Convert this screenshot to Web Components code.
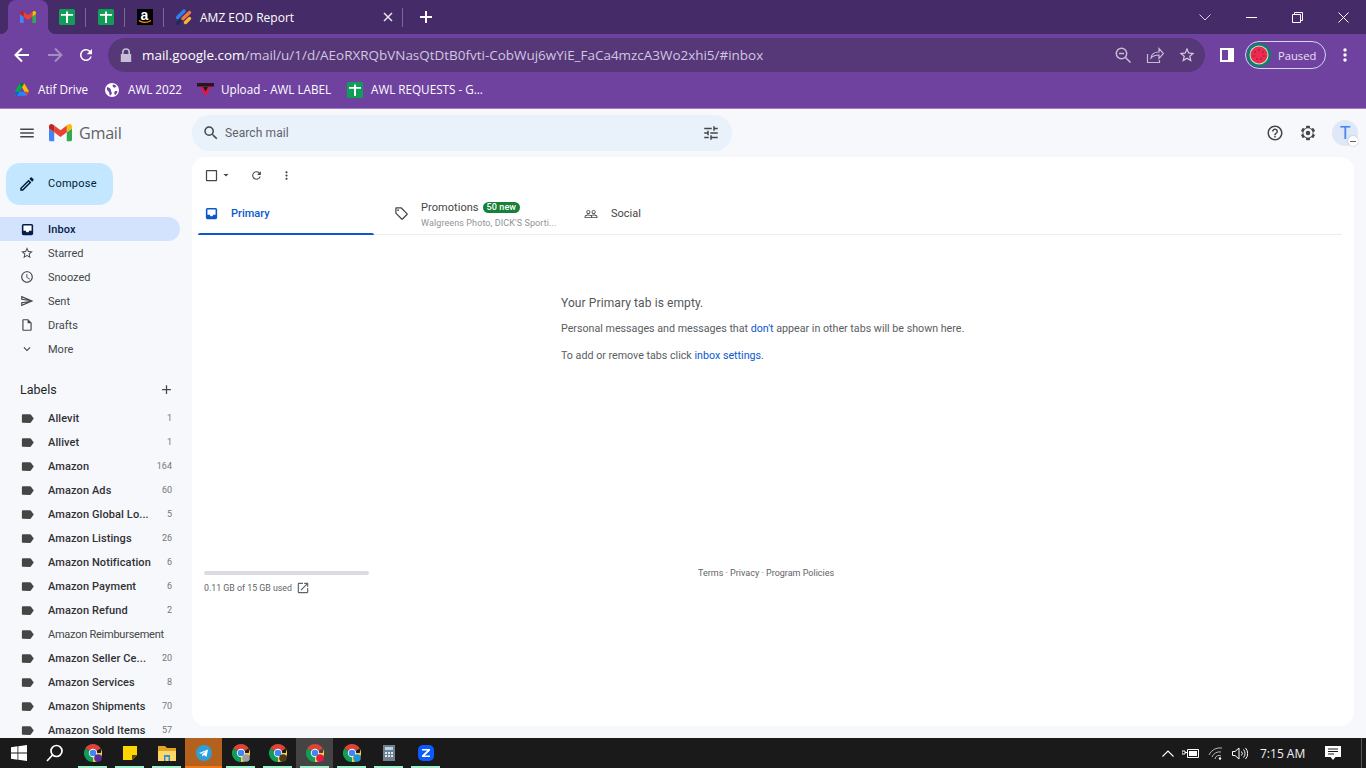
<!DOCTYPE html>
<html lang="en">
<head>
<meta charset="utf-8">
<title>Inbox - Gmail</title>
<style>
  html, body { margin: 0; height: 100%; overflow: hidden; }
  body { display: flex; flex-direction: column; width: 1366px; height: 768px; font-family: Roboto, "Liberation Sans", sans-serif; }
</style>
</head>
<body>
<chrome-tabs></chrome-tabs>
<chrome-toolbar></chrome-toolbar>
<chrome-bookmarks></chrome-bookmarks>
<gmail-app></gmail-app>
<win-taskbar></win-taskbar>

<script>
const P = {
  menu: 'M3 18h18v-2H3v2zm0-5h18v-2H3v2zm0-7v2h18V6H3z',
  search: 'M15.5 14h-.79l-.28-.27A6.471 6.471 0 0 0 16 9.5 6.5 6.5 0 1 0 9.5 16c1.61 0 3.09-.59 4.23-1.57l.27.28v.79l5 4.99L20.49 19l-4.99-5zm-6 0C7.01 14 5 11.99 5 9.5S7.01 5 9.5 5 14 7.01 14 9.5 11.99 14 9.5 14z',
  tune: 'M3 17v2h6v-2H3zM3 5v2h10V5H3zm10 16v-2h8v-2h-8v-2h-2v6h2zM7 9v2H3v2h4v2h2V9H7zm14 4v-2H11v2h10zm-6-4h2V7h4V5h-4V3h-2v6z',
  help: 'M11 18h2v-2h-2v2zm1-16C6.48 2 2 6.48 2 12s4.48 10 10 10 10-4.48 10-10S17.52 2 12 2zm0 18c-4.41 0-8-3.59-8-8s3.59-8 8-8 8 3.59 8 8-3.59 8-8 8zm0-14c-2.21 0-4 1.79-4 4h2c0-1.1.9-2 2-2s2 .9 2 2c0 2-3 1.75-3 5h2c0-2.25 3-2.5 3-5 0-2.21-1.79-4-4-4z',
  gear: 'M19.14 12.94c.04-.3.06-.61.06-.94 0-.32-.02-.64-.07-.94l2.03-1.58a.49.49 0 0 0 .12-.61l-1.92-3.32a.488.488 0 0 0-.59-.22l-2.39.96c-.5-.38-1.03-.7-1.62-.94l-.36-2.54a.484.484 0 0 0-.48-.41h-3.84c-.24 0-.43.17-.47.41l-.36 2.54c-.59.24-1.13.57-1.62.94l-2.39-.96c-.22-.08-.47 0-.59.22L2.74 8.87c-.12.21-.08.47.12.61l2.03 1.58c-.05.3-.09.63-.09.94s.02.64.07.94l-2.03 1.58a.49.49 0 0 0-.12.61l1.92 3.32c.12.22.37.29.59.22l2.39-.96c.5.38 1.03.7 1.62.94l.36 2.54c.05.24.24.41.48.41h3.84c.24 0 .44-.17.47-.41l.36-2.54c.59-.24 1.13-.56 1.62-.94l2.39.96c.22.08.47 0 .59-.22l1.92-3.32c.12-.22.07-.47-.12-.61l-2.01-1.58zM12 18.2a6.2 6.2 0 1 1 0-12.4 6.2 6.2 0 0 1 0 12.4zM12 15a3 3 0 1 0 0-6 3 3 0 0 0 0 6z',
  edit: 'M3 17.25V21h3.75L17.81 9.94l-3.75-3.75L3 17.25zM5.92 19H5v-.92l9.06-9.06.92.92L5.92 19zM20.71 5.63l-2.34-2.34a1 1 0 0 0-1.41 0l-1.83 1.83 3.75 3.75 1.83-1.83a1 1 0 0 0 0-1.41z',
  star: 'M22 9.24l-7.19-.62L12 2 9.19 8.63 2 9.24l5.46 4.73L5.82 21 12 17.27 18.18 21l-1.63-7.03L22 9.24zM12 15.4l-3.76 2.27 1-4.28-3.32-2.88 4.38-.38L12 6.1l1.71 4.04 4.38.38-3.32 2.88 1 4.28L12 15.4z',
  clock: 'M11.99 2C6.47 2 2 6.48 2 12s4.47 10 9.99 10C17.52 22 22 17.52 22 12S17.52 2 11.99 2zM12 20c-4.42 0-8-3.58-8-8s3.58-8 8-8 8 3.58 8 8-3.58 8-8 8zm.5-13H11v6l5.25 3.15.75-1.23-4.5-2.67z',
  send: 'M4 6.03l7.5 3.22-7.5-1 .01-2.22zm7.49 8.72L4 17.97v-2.22l7.49-1zM2.01 3L2 10l15 2-15 2 .01 7L23 12 2.01 3z',
  draft: 'M14 2H6c-1.1 0-2 .9-2 2v16c0 1.1.9 2 2 2h12c1.1 0 2-.9 2-2V8l-6-6zm4 18H6V4h7v5h5v11z',
  more: 'M16.59 8.59L12 13.17 7.41 8.59 6 10l6 6 6-6z',
  label: 'M17.63 5.84C17.27 5.33 16.67 5 16 5L5 5.01C3.9 5.01 3 5.9 3 7v10c0 1.1.9 1.99 2 1.99L16 19c.67 0 1.27-.33 1.63-.84L22 12l-4.37-6.16z',
  add: 'M19 13h-6v6h-2v-6H5v-2h6V5h2v6h6v2z',
  refresh: 'M17.65 6.35A7.958 7.958 0 0 0 12 4c-4.42 0-7.99 3.58-7.99 8s3.57 8 7.99 8c3.73 0 6.84-2.55 7.73-6h-2.08A5.99 5.99 0 0 1 12 18c-3.31 0-6-2.69-6-6s2.69-6 6-6c1.66 0 3.14.69 4.22 1.78L13 11h7V4l-2.35 2.35z',
  dots: 'M12 8c1.1 0 2-.9 2-2s-.9-2-2-2-2 .9-2 2 .9 2 2 2zm0 2c-1.1 0-2 .9-2 2s.9 2 2 2 2-.9 2-2-.9-2-2-2zm0 6c-1.1 0-2 .9-2 2s.9 2 2 2 2-.9 2-2-.9-2-2-2z',
  tag: 'M21.41 11.58l-9-9C12.05 2.22 11.55 2 11 2H4c-1.1 0-2 .9-2 2v7c0 .55.22 1.05.59 1.42l9 9c.36.36.86.58 1.41.58s1.05-.22 1.41-.59l7-7c.37-.36.59-.86.59-1.41s-.23-1.06-.59-1.42zM13 20.01L4 11V4h7v-.01l9 8.99-7 7.02zM6.5 8a1.5 1.5 0 1 0 0-3 1.5 1.5 0 0 0 0 3z',
  people: 'M16.5 13c-1.2 0-3.07.34-4.5 1-1.43-.67-3.3-1-4.5-1C5.33 13 1 14.08 1 16.25V19h22v-2.75c0-2.17-4.33-3.25-6.5-3.25zm-4 4.5h-10v-1.25c0-.54 2.56-1.75 5-1.75s5 1.21 5 1.75v1.25zm9 0H14v-1.25c0-.46-.2-.86-.52-1.22.88-.3 1.96-.53 3.02-.53 2.44 0 5 1.21 5 1.75v1.25zM7.5 12c1.93 0 3.5-1.57 3.5-3.5S9.43 5 7.5 5 4 6.57 4 8.5 5.57 12 7.5 12zm0-5.5c1.1 0 2 .9 2 2s-.9 2-2 2-2-.9-2-2 .9-2 2-2zm9 5.5c1.93 0 3.5-1.57 3.5-3.5S18.43 5 16.5 5 13 6.57 13 8.5s1.57 3.5 3.5 3.5zm0-5.5c1.1 0 2 .9 2 2s-.9 2-2 2-2-.9-2-2 .9-2 2-2z',
  open: 'M19 19H5V5h7V3H5a2 2 0 0 0-2 2v14a2 2 0 0 0 2 2h14c1.1 0 2-.9 2-2v-7h-2v7zM14 3v2h3.59l-9.83 9.83 1.41 1.41L19 6.41V10h2V3h-7z',
  check: 'M19 5v14H5V5h14m0-2H5c-1.1 0-2 .9-2 2v14c0 1.1.9 2 2 2h14c1.1 0 2-.9 2-2V5c0-1.1-.9-2-2-2z',
  caret: 'M7 10l5 5 5-5z'
};

function icon(name, size, color) {
  return `<svg width="${size}" height="${size}" viewBox="0 0 24 24" fill="${color}" style="display:block;flex:none"><path d="${P[name]}"/></svg>`;
}

// filled inbox with a white tray, the plain outline looked too thin
const inboxIcon = (size, color) => `<svg width="${size}" height="${size}" viewBox="0 0 24 24" style="display:block;flex:none">
  <rect x="3" y="3" width="18" height="18" rx="2.500" fill="${color}"/>
  <path d="M5.500 5.500h13v8.500h-4c0 1.500-1.100 2.500-2.500 2.500s-2.500-1-2.500-2.500h-4z" fill="#fff"/></svg>`;

const gmailLogo = s => `<svg width="${s}" height="${s * 0.75}" viewBox="52 42 88 66" style="display:block;flex:none">
  <path fill="#4285f4" d="M58 108h14V74L52 59v43c0 3.32 2.69 6 6 6"/>
  <path fill="#34a853" d="M120 108h14c3.32 0 6-2.69 6-6V59l-20 15"/>
  <path fill="#fbbc04" d="M120 48v26l20-15v-8c0-7.42-8.47-11.65-14.4-7.2"/>
  <path fill="#ea4335" d="M72 74V48l24 18 24-18v26L96 92"/>
  <path fill="#c5221f" d="M52 51v8l20 15V48l-5.6-4.2c-5.94-4.45-14.4-.22-14.4 7.2"/></svg>`;

const sheetsIcon = `<svg width="16" height="16" viewBox="0 0 16 16" style="display:block;flex:none">
  <rect width="16" height="16" rx="1.5" fill="#0f9d58"/>
  <path fill="#fff" d="M7 2.500h2V5h5v1.800H9V14H7V6.800H2V5h5z"/></svg>`;

// tabs row
class ChromeTabs extends HTMLElement {
  connectedCallback() {
    const root = this.attachShadow({ mode: 'open' });
    root.innerHTML = `
      <style>
        :host { display: flex; height: 34px; flex: none; background: #452c68; color: #fff; font: 12px "Open Sans", "Noto Sans", sans-serif; align-items: stretch; padding-left: 8px; }
        .active { width: 40px; background: #6f42a0; border-radius: 8px 8px 0 0; display: flex; align-items: center; justify-content: center; position: relative; }
        .active::before, .active::after { content: ""; position: absolute; bottom: 0; width: 8px; height: 8px; }
        .active::before { left: -8px; background: radial-gradient(circle at 0 0, transparent 8px, #6f42a0 8.5px); }
        .active::after { right: -8px; background: radial-gradient(circle at 100% 0, transparent 8px, #6f42a0 8.5px); }
        .pin { width: 39px; display: flex; align-items: center; justify-content: center; position: relative; }
        .pin.sep::after, .title::after { content: ""; position: absolute; right: 0; top: 8px; height: 19px; width: 1px; background: #7d6a98; }
        .title { width: 239px; display: flex; align-items: center; position: relative; padding-left: 12px; box-sizing: border-box; }
        .title span { margin-left: 8px; flex: 1; }
        .title svg.x { margin-right: 10px; }
        .plus { width: 46px; display: flex; align-items: center; justify-content: center; }
        .win { margin-left: auto; display: flex; }
        .win div { width: 46px; display: flex; align-items: center; justify-content: center; }
        .amz { width: 16px; height: 16px; background: #000; color: #fff; position: relative; font: bold 14px/13px "Liberation Sans", sans-serif; text-align: center; }
        .amz svg { position: absolute; left: 1px; bottom: 1px; }
      </style>
      <div class="active">${gmailLogo(16)}</div>
      <div class="pin sep" style="width:38px">${sheetsIcon}</div>
      <div class="pin sep">${sheetsIcon}</div>
      <div class="pin sep"><div class="amz">a<svg width="14" height="4" viewBox="0 0 14 4"><path d="M1 .5c3 2.6 8 2.6 12 0" fill="none" stroke="#f90" stroke-width="1.2"/></svg></div></div>
      <div class="title">
        <svg width="16" height="16" viewBox="0 0 16 16" style="flex:none">
          <path d="M1.500 8.500 8 2" stroke="#2f80ed" stroke-width="3.400" stroke-linecap="round"/>
          <path d="M7 9.500 13.500 3.500" stroke="#f2783a" stroke-width="3.400" stroke-linecap="round"/>
          <path d="M9.500 13.500l4-4" stroke="#f7b733" stroke-width="3.400" stroke-linecap="round"/>
          <path d="M1.500 14.500 4 12" stroke="#1c2a5a" stroke-width="3" stroke-linecap="round"/>
        </svg>
        <span>AMZ EOD Report</span>
        <svg class="x" width="10" height="10" viewBox="0 0 10 10"><path d="M1 1l8 8M9 1l-8 8" stroke="#e8e4ee" stroke-width="1.500"/></svg>
      </div>
      <div class="plus"><svg width="12" height="12" viewBox="0 0 12 12"><path d="M6 0v12M0 6h12" stroke="#fff" stroke-width="2"/></svg></div>
      <div class="win">
        <div><svg width="12" height="7" viewBox="0 0 12 7"><path d="M.5.5 6 6 11.500.5" fill="none" stroke="#d9d2e4"/></svg></div>
        <div><svg width="11" height="1"><rect width="11" height="1" fill="#fff"/></svg></div>
        <div><svg width="11" height="11" viewBox="0 0 11 11"><path d="M.5 2.500h8v8h-8zM2.500 2.500v-2h8v8h-2" fill="none" stroke="#fff"/></svg></div>
        <div><svg width="11" height="11" viewBox="0 0 11 11"><path d="M.5.5l10 10M10.500.5l-10 10" stroke="#fff"/></svg></div>
      </div>`;
  }
}
customElements.define('chrome-tabs', ChromeTabs);

// back / forward / omnibox / profile
class ChromeToolbar extends HTMLElement {
  connectedCallback() {
    const root = this.attachShadow({ mode: 'open' });
    root.innerHTML = `
      <style>
        :host { display: flex; height: 38px; flex: none; background: #6f42a0; align-items: flex-end; font: 14px "Open Sans", "Noto Sans", sans-serif; color: #fff; box-sizing: border-box; }
        .nav { display: flex; width: 108px; height: 34px; align-items: center; padding-left: 14px; box-sizing: border-box; gap: 15px; }
        .omni { width: 1097px; height: 34px; background: #563878; border-radius: 17px; display: flex; align-items: center; padding-left: 12px; box-sizing: border-box; }
        .url { margin-left: 10px; flex: 1; white-space: nowrap; color: #d2c6e0; font-size: 13.460px; }
        .url b { font-weight: 400; color: #fff; }
        .acts { display: flex; gap: 14px; margin-right: 9px; align-items: center; }
        .right { display: flex; flex: 1; align-items: center; height: 34px; padding-left: 15px; box-sizing: border-box; }
        .panel { width: 14px; height: 14px; background: #fff; position: relative; flex: none; }
        .panel::after { content: ""; position: absolute; left: 2px; top: 2px; width: 6px; height: 10px; background: #6f42a0; }
        .pill { margin-left: 11px; width: 81px; height: 28px; box-sizing: border-box; border: 1px solid #cfd8f0; border-radius: 14px; display: flex; align-items: center; padding-left: 1px; font-size: 11.200px; color: #e8e0f2; flex: none; }
        .pill span { margin-left: 7px; }
        .dots { margin-left: 17px; }
        .ring { width: 24px; height: 24px; }
      </style>
      <div class="nav">
        <svg width="16" height="16" viewBox="0 0 16 16" style="flex:none"><path d="M15 8H2M8 1.500 1.500 8 8 14.500" fill="none" stroke="#fff" stroke-width="2"/></svg>
        <svg width="16" height="16" viewBox="0 0 16 16" style="flex:none;margin-left:2px"><path d="M1 8h13M8 1.500 14.500 8 8 14.500" fill="none" stroke="#a48cc2" stroke-width="2"/></svg>
        ${icon('refresh', 18, '#fff').replace('flex:none', 'flex:none;margin-left:-1px')}
      </div>
      <div class="omni">
        <svg width="12" height="14" viewBox="0 0 12 14" style="flex:none"><path d="M2 6V4.200a4 4 0 0 1 8 0V6h1.200v8H.8V6zm1.600 0h4.800V4.200a2.400 2.400 0 0 0-4.800 0z" fill="#c8bcd6"/></svg>
        <div class="url"><b>mail.google.com</b>/mail/u/1/d/AEoRXRQbVNasQtDtB0fvti-CobWuj6wYiE_FaCa4mzcA3Wo2xhi5/#inbox</div>
        <div class="acts">
          <svg width="18" height="18" viewBox="0 0 18 18"><circle cx="7.500" cy="7.500" r="5.200" fill="none" stroke="#c8bcd6" stroke-width="1.500"/><path d="M5 7.500h5M11.500 11.500l5 5" stroke="#c8bcd6" stroke-width="1.500"/></svg>
          <svg width="18" height="18" viewBox="0 0 18 18"><path d="M1.500 8v8.500h12V14M5 12c.5-4 3.500-6 8-6V2.500l4.500 5-4.500 5V9c-3.500 0-6 .8-8 3z" fill="none" stroke="#c8bcd6" stroke-width="1.200"/></svg>
          ${icon('star', 18, '#d6cce2')}
        </div>
      </div>
      <div class="right">
        <div class="panel"></div>
        <div class="pill">
          <svg class="ring" viewBox="0 0 24 24" style="flex:none">
            <circle cx="12" cy="12" r="12" fill="#0e7f6c"/><circle cx="12" cy="12" r="9.500" fill="#c8e6c0"/><circle cx="12" cy="12" r="8.500" fill="#ee2a50"/>
            <g fill="#7a1c36"><circle cx="8" cy="9" r=".8"/><circle cx="12" cy="7" r=".8"/><circle cx="16" cy="9" r=".8"/><circle cx="7" cy="13" r=".8"/><circle cx="17" cy="13" r=".8"/><circle cx="10" cy="16" r=".8"/><circle cx="14" cy="16" r=".8"/></g>
          </svg>
          <span>Paused</span>
        </div>
        <svg class="dots" width="4" height="14" viewBox="0 0 4 14" style="flex:none"><circle cx="2" cy="2" r="1.700" fill="#fff"/><circle cx="2" cy="7" r="1.700" fill="#fff"/><circle cx="2" cy="12" r="1.700" fill="#fff"/></svg>
      </div>`;
  }
}
customElements.define('chrome-toolbar', ChromeToolbar);

class ChromeBookmarks extends HTMLElement {
  connectedCallback() {
    const root = this.attachShadow({ mode: 'open' });
    root.innerHTML = `
      <style>
        :host { display: flex; height: 37px; flex: none; background: #6f42a0; border-bottom: 1px solid #9b7fc0; box-sizing: border-box; align-items: center; padding-left: 15px; color: #fff; font: 11.700px "Open Sans", "Noto Sans", sans-serif; padding-bottom: 1px; }
        .b { display: flex; align-items: center; white-space: nowrap; line-height: 14px; padding-bottom: 1px; }
        .b svg { margin-top: 1px; }
      </style>
      <div class="b" style="width:90px;gap:9px">
        <svg width="14" height="13" viewBox="0 0 87.3 78" style="flex:none">
          <path d="m6.6 66.85 3.85 6.65c.8 1.4 1.95 2.5 3.3 3.3l13.75-23.8h-27.5c0 1.55.4 3.1 1.2 4.5z" fill="#0066da"/><path d="m43.65 25-13.75-23.8c-1.35.8-2.5 1.9-3.3 3.3l-25.4 44a9.06 9.06 0 0 0 -1.2 4.5h27.5z" fill="#00ac47"/><path d="m73.55 76.8c1.35-.8 2.5-1.9 3.3-3.3l1.6-2.75 7.65-13.25c.8-1.4 1.2-2.95 1.2-4.5h-27.502l5.852 11.5z" fill="#ea4335"/><path d="m43.65 25 13.75-23.8c-1.35-.8-2.9-1.2-4.5-1.2h-18.5c-1.6 0-3.15.45-4.5 1.2z" fill="#00832d"/><path d="m59.8 53h-32.3l-13.75 23.8c1.35.8 2.9 1.2 4.5 1.2h50.8c1.6 0 3.15-.45 4.5-1.2z" fill="#2684fc"/><path d="m73.4 26.500-12.700-22c-.8-1.400-1.950-2.500-3.300-3.300l-13.750 23.800 16.150 28h27.450c0-1.550-.4-3.100-1.200-4.500z" fill="#ffba00"/>
        </svg>
        Atif Drive</div>
      <div class="b" style="width:92px;gap:9px">
        <svg width="14" height="14" viewBox="0 0 14 14" style="flex:none"><circle cx="7" cy="7" r="7" fill="#fff"/><path d="M2 4.500c1.500-.5 2.500.5 3.500 1.500s0 2 1 3-.5 3.500-1.500 3.500c-1-1.500-.5-3-1.500-4S1.500 7 2 4.500zM8 1.500c1.500 0 3 1 3.500 2-1 .5-1.500 1.500-2.500 1S7 2.500 8 1.500zM10 8c1 0 2 0 2.500.5-.3 1.500-1.500 3-2.500 3.500-1-.8-1-3 0-4z" fill="#6f42a0"/></svg>
        AWL 2022</div>
      <div class="b" style="width:150px;gap:7px">
        <svg width="17" height="14" viewBox="0 0 17 14" style="flex:none"><rect x="0" y="0" width="17" height="3.500" fill="#2a1420"/><path d="M3 4h11l-5.500 9z" fill="#e3173e"/><path d="M6 4h5l-2.500 4.500z" fill="#1b1b1b"/></svg>
        Upload - AWL LABEL</div>
      <div class="b" style="gap:8px">${sheetsIcon}AWL REQUESTS - G...</div>`;
  }
}
customElements.define('chrome-bookmarks', ChromeBookmarks);

// one sidebar row, text goes in the slot
class GmNavItem extends HTMLElement {
  connectedCallback() {
    const root = this.attachShadow({ mode: 'open' });
    const name = this.getAttribute('icon');
    const active = this.hasAttribute('active');
    const count = this.getAttribute('count') || '';
    const size = name === 'label' ? 15 : 14;
    const col = active ? '#041e49' : '#444746';
    root.innerHTML = `
      <style>
        :host { display: flex; height: 24px; width: 180px; flex: none; box-sizing: border-box; align-items: center; padding: 0 8px 0 20px; border-radius: 0 12px 12px 0; font-size: 11px; color: #444746; }
        :host([active]) { background: #d3e3fd; color: #041e49; font-weight: 500; }
        :host([bold]) { color: #303134; font-weight: 500; }
        .i { width: 28px; flex: none; }
        .t { flex: 1; white-space: nowrap; overflow: hidden; }
        :host([bold]) .t, :host([active]) .t { letter-spacing: .1px; }
        .c { font-size: 9px; color: #747775; font-weight: 400; padding-left: 6px; }
        .c:empty { display: none; }
      </style>
      <div class="i">${name === 'inbox' ? inboxIcon(15, col) : icon(name, size, col)}</div>
      <div class="t"><slot></slot></div>
      <div class="c">${count}</div>`;
  }
}
customElements.define('gm-nav-item', GmNavItem);

class GmSidebar extends HTMLElement {
  connectedCallback() {
    const root = this.attachShadow({ mode: 'open' });
    const labels = [
      ['Allevit', '1'], ['Allivet', '1'], ['Amazon', '164'], ['Amazon Ads', '60'],
      ['Amazon Global Lo...', '5'], ['Amazon Listings', '26'], ['Amazon Notification', '6'],
      ['Amazon Payment', '6'], ['Amazon Refund', '2'], ['Amazon Reimbursement', '', true],
      ['Amazon Seller Ce...', '20'], ['Amazon Services', '8'], ['Amazon Shipments', '70'],
      ['Amazon Sold Items', '57']
    ];
    root.innerHTML = `
      <style>
        :host { display: block; width: 192px; flex: none; overflow: hidden; }
        .compose { margin: 6px 0 12px 6px; width: 107px; height: 42px; border-radius: 14px; background: #c2e7ff; display: flex; align-items: center; padding: 0 0 1px 12px; box-sizing: border-box; gap: 12px; font-size: 11px; color: #001d35; letter-spacing: .25px; }
        .head { display: flex; align-items: center; justify-content: space-between; height: 24px; margin-top: 16px; margin-bottom: 5px; padding: 0 6px 0 20px; width: 180px; box-sizing: border-box; font-size: 12.500px; color: #1f1f1f; }
      </style>
      <div class="compose">${icon('edit', 18, '#001d35')}Compose</div>
      <gm-nav-item icon="inbox" active>Inbox</gm-nav-item>
      <gm-nav-item icon="star">Starred</gm-nav-item>
      <gm-nav-item icon="clock">Snoozed</gm-nav-item>
      <gm-nav-item icon="send">Sent</gm-nav-item>
      <gm-nav-item icon="draft">Drafts</gm-nav-item>
      <gm-nav-item icon="more">More</gm-nav-item>
      <div class="head">Labels ${icon('add', 15, '#444746')}</div>
      ${labels.map(l => `<gm-nav-item icon="label" count="${l[1]}" ${l[2] ? 'style="letter-spacing:-.25px"' : 'bold'}>${l[0]}</gm-nav-item>`).join('')}`;
  }
}
customElements.define('gm-sidebar', GmSidebar);

class GmTopbar extends HTMLElement {
  connectedCallback() {
    const root = this.attachShadow({ mode: 'open' });
    root.innerHTML = `
      <style>
        :host { display: flex; height: 48px; flex: none; align-items: center; box-sizing: border-box; }
        .brand { width: 192px; flex: none; display: flex; align-items: center; padding-left: 18px; box-sizing: border-box; }
        .name { margin-left: 7px; font: 16.200px "Open Sans", Roboto, sans-serif; color: #5f6368; letter-spacing: -.3px; }
        .search { width: 540px; height: 36px; flex: none; background: #e9f1fb; border-radius: 18px; display: flex; align-items: center; padding: 0 12px 0 10px; box-sizing: border-box; font-size: 12px; color: #5f6368; }
        .search span { flex: 1; margin-left: 5px; letter-spacing: .1px; }
        .tools { margin-left: auto; display: flex; align-items: center; padding-right: 8px; }
        .avatar { width: 26px; height: 26px; border-radius: 50%; background: #dfe8f8; color: #4285f4; font: 18px/25px Roboto, sans-serif; text-align: center; position: relative; margin-left: 15px; }
        .avatar i { position: absolute; right: 0; bottom: 0; width: 10px; height: 10px; border-radius: 50%; background: #fff; box-shadow: 0 0 2px #0004; }
        .avatar i::after { content: ""; position: absolute; left: 2px; top: 4.500px; width: 6px; height: 1.500px; background: #666; }
      </style>
      <div class="brand">
        ${icon('menu', 18, '#444746')}
        <span style="width:13px"></span>
        ${gmailLogo(23)}
        <span class="name">Gmail</span>
      </div>
      <div class="search">${icon('search', 18, '#444746')}<span>Search mail</span>${icon('tune', 18, '#444746')}</div>
      <div class="tools">
        ${icon('help', 18, '#444746')}
        <span style="width:15px"></span>
        ${icon('gear', 18, '#444746')}
        <div class="avatar">T<i></i></div>
      </div>`;
  }
}
customElements.define('gm-topbar', GmTopbar);

class GmMain extends HTMLElement {
  connectedCallback() {
    const root = this.attachShadow({ mode: 'open' });
    root.innerHTML = `
      <style>
        :host { display: flex; flex-direction: column; width: 1162px; height: 569px; flex: none; background: #fff; border-radius: 14px; box-sizing: border-box; color: #444746; }
        .bar { display: flex; align-items: center; height: 36px; padding-left: 12px; flex: none; }
        .tabs { display: flex; height: 41px; margin: 0 12px 0 6px; border-bottom: 1px solid #eceff1; flex: none; box-sizing: content-box; }
        .tab { width: 176px; display: flex; align-items: center; padding-left: 6px; box-sizing: border-box; position: relative; font-size: 11px; color: #444746; height: 41px; }
        .tab.on { color: #0b57d0; font-weight: 500; padding-left: 6px; }
        .tab.on::after { content: ""; position: absolute; left: 0; right: 0; bottom: -1px; height: 2px; background: #0b57d0; border-radius: 2px 2px 0 0; }
        .tab.on span { margin-left: 12px; }
        .promo { width: 199px; padding-left: 20px; }
        .promo > div { margin-left: 12px; padding-top: 1px; }
        .top { display: flex; align-items: center; gap: 4px; height: 13px; letter-spacing: .05px; }
        .badge { background: #188038; color: #fff; font-size: 9px; font-weight: 500; border-radius: 7px; padding: 0 4px; line-height: 11px; letter-spacing: .1px; }
        .sub { font-size: 9px; color: #8f9499; margin-top: 4px; white-space: nowrap; letter-spacing: .1px; }
        .social { padding-left: 11px; }
        .social span { margin-left: 13px; }
        .empty { margin: 60px 0 0 369px; flex: none; }
        .empty h3 { margin: 0; font-size: 12px; font-weight: 400; line-height: 16px; color: #53575a; letter-spacing: .1px; }
        .empty p { margin: 0; font-size: 10.700px; line-height: 14px; color: #5a5e62; }
        .empty p + p { margin-top: 13px; }
        a { color: #0b57d0; text-decoration: none; }
        .foot { margin-top: 204px; padding-left: 12px; display: flex; font-size: 8.800px; color: #5f6368; }
        .use { width: 165px; flex: none; }
        .track { height: 4px; border-radius: 2px; background: #dadce0; margin-top: 4px; }
        .used { display: flex; align-items: center; margin-top: 6px; gap: 4px; }
        .links { margin-left: 329px; line-height: 11px; margin-top: 1px; font-size: 9px; }
      </style>
      <div class="bar">
        ${icon('check', 15, '#444746')}
        ${icon('caret', 12, '#444746').replace('flex:none', 'flex:none;margin-left:1px')}
        <span style="width:18px"></span>
        ${icon('refresh', 13, '#444746')}
        <span style="width:17px"></span>
        ${icon('dots', 13, '#444746')}
      </div>
      <div class="tabs">
        <div class="tab on">${inboxIcon(15, '#0b57d0')}<span>Primary</span></div>
        <div class="tab promo">${icon('tag', 15, '#444746')}
          <div>
            <div class="top">Promotions <span class="badge">50 new</span></div>
            <div class="sub">Walgreens Photo, DICK'S Sporti...</div>
          </div>
        </div>
        <div class="tab social">${icon('people', 14, '#444746')}<span>Social</span></div>
      </div>
      <div class="empty">
        <h3>Your Primary tab is empty.</h3>
        <p style="margin-top:11px">Personal messages and messages that <a>don't</a> appear in other tabs will be shown here.</p>
        <p>To add or remove tabs click <a>inbox settings</a>.</p>
      </div>
      <div class="foot">
        <div class="use">
          <div class="track"></div>
          <div class="used"><span>0.11 GB of 15 GB used</span>${icon('open', 14, '#5f6368')}</div>
        </div>
        <div class="links">Terms · Privacy · Program Policies</div>
      </div>`;
  }
}
customElements.define('gm-main', GmMain);

class GmailApp extends HTMLElement {
  connectedCallback() {
    const root = this.attachShadow({ mode: 'open' });
    root.innerHTML = `
      <style>
        :host { display: flex; flex-direction: column; height: 629px; flex: none; background: #f6f8fc; overflow: hidden; }
        .body { display: flex; flex: 1; min-height: 0; }
      </style>
      <gm-topbar></gm-topbar>
      <div class="body">
        <gm-sidebar></gm-sidebar>
        <div><gm-main></gm-main></div>
      </div>`;
  }
}
customElements.define('gmail-app', GmailApp);

class WinTaskbar extends HTMLElement {
  connectedCallback() {
    const root = this.attachShadow({ mode: 'open' });
    const chrome = badge => `<svg width="18" height="18" viewBox="0 0 18 18">
      <path d="M9 9 1.200 4.500A9 9 0 0 1 9 0a9 9 0 0 1 7.800 4.500z" fill="#db4437"/>
      <path d="M9 9 1.200 4.500A9 9 0 0 0 9 18l4.500-1.200z" fill="#0f9d58"/>
      <path d="M9 9h7.800A9 9 0 0 0 16.800 4.500 9 9 0 0 1 9 18z" fill="#ffcd40"/>
      <circle cx="9" cy="9" r="4.200" fill="#fff"/><circle cx="9" cy="9" r="3.300" fill="#4285f4"/>
      <circle cx="14" cy="14" r="3.800" fill="${badge}"/></svg>`;
    root.innerHTML = `
      <style>
        :host { display: flex; height: 30px; flex: none; background: #1a1a1a; color: #f2f2f2; font: 12px "Open Sans", "Noto Sans", sans-serif; }
        .start { width: 37px; display: flex; align-items: center; justify-content: center; }
        .t { width: 37px; display: flex; align-items: center; justify-content: center; position: relative; flex: none; }
        .t.run::after { content: ""; position: absolute; left: 4px; right: 4px; bottom: 0; height: 2px; background: #a3f0cf; }
        .t.tg { background: #b3611d; }
        .t.tg::after { content: ""; position: absolute; bottom: 0; height: 2px; left: 0; right: 0; background: #f07a18; }
        .t.cur { background: #444; }
        .tray { margin-left: auto; display: flex; align-items: center; }
        .time { width: 44px; margin-left: 12px; white-space: nowrap; }
        .note { margin-left: 21px; margin-right: 20px; }
        .edge { width: 1px; height: 30px; background: #555; margin-right: 4px; }
      </style>
      <div class="start"><svg width="16" height="16" viewBox="0 0 16 16" fill="#fff"><path d="M0 2.200 6.500 1.300v6.300H0zM7.300 1.200 16 0v7.600H7.300zM0 8.400h6.500v6.300L0 13.800zM7.300 8.400H16V16l-8.700-1.200z"/></svg></div>
      <div class="t"><svg width="18" height="18" viewBox="0 0 18 18" fill="none" stroke="#fff" stroke-width="1.700" style="margin-right:2px"><circle cx="10.500" cy="7" r="5.500"/><path d="M6.500 11 1 17"/></svg></div>
      <div class="t run">${chrome('#5b2d9c')}</div>
      <div class="t run"><svg width="14" height="14" viewBox="0 0 14 14"><path d="M0 0h14v9l-5 5H0z" fill="#ffd400"/><path d="M14 9 9 14V9z" fill="#5a4a10"/></svg></div>
      <div class="t run"><svg width="18" height="15" viewBox="0 0 18 15"><path d="M0 0h7l2 2h9v13H0z" fill="#e0a526"/><path d="M0 5h18v10H0z" fill="#ffd767"/><path d="M6 9h6v6h-1.500v-4h-3v4H6z" fill="#2f8fd8"/></svg></div>
      <div class="t tg"><svg width="16" height="16" viewBox="0 0 16 16"><circle cx="8" cy="8" r="8" fill="#2c9fd9"/><path d="M3 8l9-3.500L10.500 12 8 10 6.500 11.500 6 9.200l4.500-3.200L5 8.800z" fill="#fff"/></svg></div>
      <div class="t run">${chrome('#9aa0a6')}</div>
      <div class="t run">${chrome('#4a3a20')}</div>
      <div class="t run cur">${chrome('#e8174a')}</div>
      <div class="t run">${chrome('#2196d6')}</div>
      <div class="t run"><svg width="12" height="16" viewBox="0 0 12 16"><rect width="12" height="16" fill="#6c8090"/><rect x="2" y="2" width="8" height="3" fill="#b8d4e4"/><g fill="#dfe7ec"><rect x="2" y="7" width="2" height="2"/><rect x="5" y="7" width="2" height="2"/><rect x="8" y="7" width="2" height="2"/><rect x="2" y="10" width="2" height="2"/><rect x="5" y="10" width="2" height="2"/><rect x="8" y="10" width="2" height="2"/></g></svg></div>
      <div class="t run"><svg width="16" height="16" viewBox="0 0 16 16"><rect width="16" height="16" rx="5" fill="#0b5cff"/><path d="M4 4h8v1.600L6.800 10.500H12V12H4v-1.600l5.200-4.900H4z" fill="#fff"/></svg></div>
      <div class="tray">
        <svg width="12" height="7" viewBox="0 0 12 7" style="margin-right:8px"><path d="M.5 6.500 6 1l5.500 5.500" fill="none" stroke="#fff" stroke-width="1.100"/></svg>
        <svg width="17" height="11" viewBox="0 0 17 11" style="margin-right:9px"><path d="M5.500 1.500h11v8h-11z" fill="none" stroke="#fff"/><rect x="7" y="3" width="8" height="5" fill="#fff"/><path d="M0 3h3v3H0zM3 4.500h3" stroke="#fff"/></svg>
        <svg width="15" height="13" viewBox="0 0 15 13" style="margin-right:9px" fill="none" stroke="#b8b8b8"><path d="M1 8a12 12 0 0 1 13-7M4 10a8 8 0 0 1 9-5M7 12a4 4 0 0 1 6-3"/><circle cx="12" cy="11.500" r="1.200" fill="#fff" stroke="none"/></svg>
        <svg width="16" height="13" viewBox="0 0 16 13" fill="none" stroke="#fff"><path d="M.5 4.500h2.500L7 1v11L3 8.500H.5zM9.500 4.500a3 3 0 0 1 0 4M11.500 2.500a6 6 0 0 1 0 8M13.500 1a8 8 0 0 1 0 11"/></svg>
        <span class="time">7:15 AM</span>
        <svg class="note" width="16" height="15" viewBox="0 0 16 15" fill="#fff"><path d="M0 0h16v11h-5.500L8 14 5.500 11H0z"/><path d="M3 3h10M3 5.500h10M3 8h6" stroke="#1a1a1a"/></svg>
        <div class="edge"></div>
      </div>`;
  }
}
customElements.define('win-taskbar', WinTaskbar);
</script>
</body>
</html>
